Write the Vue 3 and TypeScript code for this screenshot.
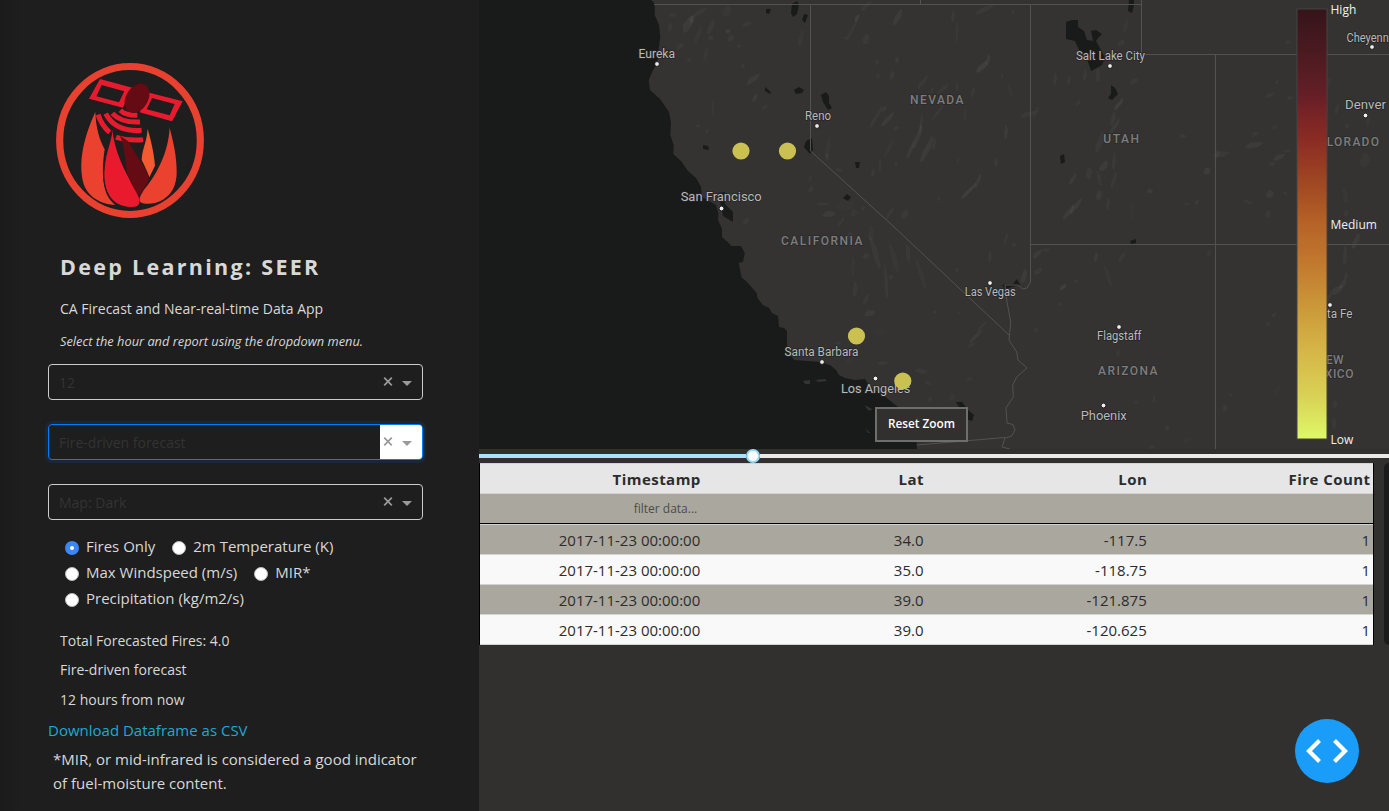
<script setup lang="ts">
interface Patch { x: number; y: number; w: number; h: number; r: number; o: number }
interface Place { name: string; x: number; y: number; w: number; size: number; dot: [number, number] }
interface Region { name: string; x: number; y: number; w: number }

const selects = [
  { value: '12', focused: false },
  { value: 'Fire-driven forecast', focused: true },
  { value: 'Map: Dark', focused: false },
]
const layerRows = [
  [{ label: 'Fires Only', on: true }, { label: '2m Temperature (K)', on: false }],
  [{ label: 'Max Windspeed (m/s)', on: false }, { label: 'MIR*', on: false }],
  [{ label: 'Precipitation (kg/m2/s)', on: false }],
]
const summary = ['Total Forecasted Fires: 4.0', 'Fire-driven forecast', '12 hours from now']

const columns = ['Timestamp', 'Lat', 'Lon', 'Fire Count']
const rows = [
  ['2017-11-23 00:00:00', '34.0', '-117.5', '1'],
  ['2017-11-23 00:00:00', '35.0', '-118.75', '1'],
  ['2017-11-23 00:00:00', '39.0', '-121.875', '1'],
  ['2017-11-23 00:00:00', '39.0', '-120.625', '1'],
]

const places: Place[] = [
  { name: 'Eureka', x: 638.5, y: 58, w: 36.5, size: 12, dot: [657, 64] },
  { name: 'Reno', x: 805, y: 119.5, w: 26, size: 12, dot: [817, 126] },
  { name: 'San Francisco', x: 680.7, y: 201.4, w: 81, size: 13.4, dot: [721.5, 208.5] },
  { name: 'Salt Lake City', x: 1076, y: 60, w: 69, size: 12, dot: [1110, 66] },
  { name: 'Cheyenn', x: 1346.5, y: 41.5, w: 42.3, size: 12, dot: [1372, 47] },
  { name: 'Denver', x: 1345, y: 108.5, w: 41, size: 13.4, dot: [1365.5, 115.5] },
  { name: 'Las Vegas', x: 964.7, y: 296, w: 51, size: 12, dot: [990, 283] },
  { name: 'Santa Barbara', x: 784.5, y: 356, w: 74, size: 12, dot: [822, 362] },
  { name: 'Los Angeles', x: 841, y: 393, w: 69.3, size: 13.4, dot: [875.5, 378.5] },
  { name: 'Flagstaff', x: 1097, y: 339.5, w: 44.5, size: 12, dot: [1119, 327] },
  { name: 'Phoenix', x: 1080.7, y: 420, w: 46, size: 13.4, dot: [1103.5, 405.5] },
  { name: 'Santa Fe', x: 1307, y: 317.5, w: 45.5, size: 12, dot: [1330, 305] },
]
const regions: Region[] = [
  { name: 'NEVADA', x: 910, y: 103.5, w: 53.5 },
  { name: 'UTAH', x: 1103.3, y: 143, w: 35.7 },
  { name: 'CALIFORNIA', x: 781, y: 245.4, w: 81.5 },
  { name: 'ARIZONA', x: 1098, y: 375, w: 59.5 },
  { name: 'COLORADO', x: 1308, y: 146, w: 71 },
  { name: 'NEW', x: 1317.5, y: 363.5, w: 26 },
  { name: 'MEXICO', x: 1306.5, y: 377.5, w: 47 },
]
const fires = [[741, 151], [787.5, 151], [856.5, 336], [902.8, 381]]

// x, y, width, height, rotation, strength
const relief: number[][] = [
  [688, 24, 20, 8, -55, 4], [673, 15, 9, 4, 0, 3], [670, 27, 5, 9, 0, 3], [700, 12, 18, 4, -30, 3], [692, 19, 9, 5, -60, 4],
  [711, 27, 6, 16, 20, 3], [680, 46, 10, 5, -30, 3], [727, 11, 9, 12, 10, 2], [747, 24, 11, 4, -12, 3], [728, 31, 6, 4, 0, 5],
  [731, 38, 7, 7, 0, 3], [711, 38, 6, 5, 30, 3], [706, 54, 5, 14, 10, 2], [689, 60, 6, 3, -20, 3], [739, 46, 6, 4, 0, 3],
  [753, 79, 18, 5, -35, 4], [743, 66, 4, 5, 0, 3], [755, 98, 4, 9, 20, 4], [765, 107, 4, 7, 40, 3], [713, 108, 3, 18, -5, 2],
  [698, 126, 5, 3, 20, 3], [707, 131, 3, 5, 0, 3], [746, 221, 8, 5, -30, 3], [698, 35, 5, 20, 20, 2],
  [866, 6, 16, 4, -40, 3], [857, 18, 9, 4, -55, 5], [898, 17, 6, 18, 25, 4], [953, 16, 4, 11, 0, 3], [957, 32, 3, 20, 0, 3],
  [985, 9, 24, 5, -25, 3], [1013, 12, 3, 4, 0, 3], [866, 39, 7, 11, 10, 3], [846, 38, 8, 3, 0, 2], [801, 38, 5, 18, 10, 2],
  [852, 30, 4, 25, 25, 2], [897, 60, 4, 6, 0, 4], [877, 62, 4, 6, 0, 3], [892, 75, 5, 9, 0, 3], [878, 76, 5, 5, 0, 3],
  [923, 82, 4, 17, 35, 3], [943, 89, 4, 15, 45, 3], [982, 67, 6, 15, 40, 5], [988, 60, 4, 12, 10, 4], [973, 92, 4, 11, 10, 3],
  [1002, 76, 3, 6, -10, 3], [1010, 90, 3, 15, -15, 2], [957, 86, 3, 10, 0, 3], [939, 111, 3, 22, 35, 3], [932, 90, 3, 6, 0, 3],
  [876, 117, 4, 26, 28, 3], [888, 119, 5, 19, 40, 4], [896, 128, 8, 4, -15, 3], [884, 109, 9, 4, -40, 3], [921, 124, 3, 21, 5, 3],
  [918, 136, 5, 26, 18, 4], [911, 149, 4, 20, 20, 4], [927, 149, 6, 29, 23, 4], [934, 143, 4, 14, 0, 3], [889, 148, 4, 20, 25, 2],
  [965, 115, 2, 14, 0, 3], [1006, 132, 4, 14, 0, 4], [1028, 114, 18, 5, -15, 3], [1036, 112, 4, 12, 20, 3], [996, 162, 4, 9, -10, 3],
  [978, 181, 4, 16, 20, 4], [969, 191, 4, 22, 43, 5], [939, 199, 3, 5, 0, 3], [958, 160, 3, 6, 0, 2], [880, 165, 3, 13, 0, 3],
  [873, 173, 4, 8, 0, 3], [896, 164, 3, 4, 0, 3], [828, 148, 5, 20, 4, 2], [827, 157, 5, 8, -20, 3], [839, 170, 7, 4, 30, 3],
  [811, 189, 5, 7, 20, 3], [822, 204, 14, 3, 0, 3], [829, 214, 14, 6, 0, 4], [854, 213, 7, 8, 0, 2], [905, 214, 7, 10, 20, 3],
  [890, 213, 4, 15, 30, 3], [841, 222, 3, 12, 30, 3], [863, 208, 4, 5, 0, 3], [810, 178, 4, 6, 0, 2], [845, 205, 20, 12, 0, 1],
  [1055, 79, 4, 13, 0, 3], [1069, 80, 3, 11, 10, 3], [1085, 75, 4, 11, 5, 3], [1098, 75, 5, 14, -4, 3], [1119, 104, 4, 15, 35, 5],
  [1078, 103, 3, 7, 30, 3], [1134, 81, 10, 5, -30, 3], [1121, 43, 9, 5, -20, 3], [1126, 25, 5, 14, 10, 2], [1113, 119, 5, 15, 10, 3],
  [1100, 142, 7, 23, 15, 3], [1115, 126, 4, 19, 30, 4], [1089, 173, 7, 12, 0, 3], [1104, 166, 7, 12, 30, 4], [1114, 161, 4, 18, 0, 3],
  [1073, 179, 4, 13, 30, 4], [1076, 206, 5, 20, 35, 4], [1069, 212, 5, 19, 35, 4], [1099, 195, 6, 10, 0, 4], [1108, 204, 4, 12, 0, 3],
  [1099, 178, 4, 16, -15, 3], [1114, 180, 4, 17, 15, 3], [1150, 191, 6, 5, 20, 4], [1183, 136, 8, 4, 15, 3], [1132, 210, 6, 18, 0, 1],
  [1254, 145, 20, 6, -8, 4], [1255, 134, 8, 4, -25, 3], [1270, 95, 12, 4, -15, 3], [1277, 82, 3, 5, 40, 3], [1288, 42, 6, 4, 0, 3],
  [1207, 171, 8, 7, -15, 4], [1221, 154, 18, 6, -5, 3], [1217, 154, 5, 9, 0, 3], [1279, 157, 14, 5, -20, 4], [1272, 164, 8, 4, 0, 3],
  [1270, 194, 8, 8, 0, 4], [1248, 202, 11, 3, 20, 3], [1197, 202, 5, 5, 10, 3], [1187, 204, 7, 2, 0, 3], [1287, 151, 9, 3, 0, 3],
  [1285, 193, 5, 3, 30, 3], [1290, 98, 7, 4, 0, 3], [1268, 214, 5, 8, 0, 3], [1275, 127, 5, 6, 40, 2],
  [1365, 160, 11, 15, 0, 2], [1345, 195, 5, 16, -15, 2], [1347, 126, 5, 5, 0, 3], [1368, 120, 4, 14, 0, 2], [1337, 109, 4, 10, 10, 3],
  [1346, 213, 5, 6, 0, 3], [1329, 82, 4, 11, 10, 2], [1356, 241, 6, 17, 20, 4], [1345, 255, 5, 20, 0, 3], [1346, 276, 4, 8, 0, 3],
  [1337, 290, 14, 7, -30, 4], [1343, 284, 5, 11, 25, 4], [1329, 297, 4, 14, 25, 3], [1335, 404, 5, 8, 0, 3], [1334, 423, 5, 11, -10, 3],
  [1006, 239, 3, 13, 10, 3], [1014, 245, 5, 5, 20, 3], [1024, 276, 6, 15, 10, 4], [1037, 254, 13, 5, -40, 4], [1046, 250, 10, 3, 0, 3],
  [1038, 271, 11, 5, -30, 3], [1063, 287, 10, 4, -35, 5], [1076, 281, 4, 3, 0, 3], [1060, 304, 5, 3, 0, 3], [1036, 330, 4, 5, 0, 3],
  [1108, 276, 5, 22, -20, 2], [1096, 257, 4, 10, 5, 4], [1122, 257, 4, 11, 30, 3], [1209, 253, 4, 6, 10, 3], [1118, 353, 4, 6, 0, 3],
  [1136, 402, 6, 3, 0, 3], [1154, 399, 3, 8, 0, 3], [1167, 428, 5, 6, 0, 3], [1225, 408, 6, 7, 0, 3], [1231, 395, 4, 3, 0, 3],
  [1274, 315, 7, 4, -30, 3], [1268, 324, 5, 4, 0, 3], [1187, 440, 9, 7, 0, 1], [1152, 447, 6, 4, 0, 3], [1277, 390, 6, 14, 25, 1],
  [850, 236, 7, 8, 0, 3], [866, 256, 8, 6, 0, 3], [871, 233, 6, 15, 0, 2], [875, 252, 6, 35, -18, 3], [886, 281, 4, 36, -5, 3],
  [894, 258, 6, 30, -18, 2], [908, 253, 5, 18, -8, 3], [921, 274, 5, 32, -20, 2], [855, 289, 5, 16, 0, 3], [866, 299, 5, 10, 20, 3],
  [870, 313, 12, 6, -5, 4], [891, 277, 5, 5, 0, 3], [935, 312, 5, 4, 25, 3], [959, 313, 3, 3, 0, 3], [853, 266, 4, 20, 0, 2],
  [976, 336, 4, 18, 40, 4], [971, 345, 7, 4, -20, 3], [982, 326, 3, 14, 40, 3], [838, 343, 7, 3, 0, 3], [849, 361, 8, 8, 0, 1],
  [883, 363, 12, 4, 0, 3], [921, 371, 14, 5, 15, 3], [928, 383, 8, 3, 30, 3], [952, 397, 7, 8, 0, 2], [970, 379, 8, 4, 0, 2],
  [990, 257, 4, 11, 0, 3], [957, 270, 4, 5, 0, 3], [930, 399, 4, 6, 0, 3], [955, 436, 30, 4, -10, 1], [880, 332, 13, 8, 0, 1],
]
const patches: Patch[] = relief.map(([x, y, w, h, r, o]) => ({ x, y, w, h, r, o: o * 0.011 }))

// A small irregular polygon centred on the patch.
function patchPoints(p: Patch): string {
  const a = p.w / 2
  const b = p.h / 2
  return [[-a, b * 0.3], [-a * 0.3, -b], [a * 0.5, -b * 0.8], [a, -b * 0.2], [a * 0.4, b * 0.9], [-a * 0.6, b]]
    .map(([dx, dy]) => `${(p.x + dx).toFixed(1)},${(p.y + dy).toFixed(1)}`)
    .join(' ')
}
</script>

<template>
  <div class="app">
    <aside class="sidebar">
      <svg class="logo" viewBox="0 0 540 540">
        <ellipse cx="270" cy="271.500" rx="211" ry="222" fill="none" stroke="#e8412f" stroke-width="21.500" />
        <g fill="#ea1a2e" fill-rule="evenodd">
          <path d="M180 87L277 113L249 173L147 146ZM185 105L169 139L237 157L253 124Z" />
          <path d="M322 127L428 154L396 214L299 187ZM336 144L320 178L389 196L404 162Z" />
        </g>
        <g fill="none" stroke="#ea1a2e" stroke-width="15">
          <path d="M241 181Q257 197 292 196" />
          <path d="M217 190Q244 219 300 216" />
          <path d="M197 191Q226 247 305 241" />
          <path d="M174 194Q186 228 209 247M228 262Q265 273 309 269" />
        </g>
        <ellipse cx="291" cy="145" rx="33" ry="47" transform="rotate(32 291 145)" fill="#650b13" />
        <path d="M166 186C168 237 179 270 194 298C188 337 185 390 197 424C203 443 214 455 226 465C192 464 148 447 132 405C112 340 132 260 166 186Z" fill="#ea422f" />
        <path d="M323 236C332 270 341 300 345 347L328 382C322 364 313 346 305 330C307 293 320 280 323 236Z" fill="#f35a32" />
        <path d="M218 231C223 302 254 362 289 422C302 445 303 463 291 470C273 476 244 471 226 458C195 435 188 391 193 350C197 305 212 280 218 231Z" fill="#e9192e" stroke="#1e1e1e" stroke-width="3" />
        <path d="M240 257L265 274C287 313 310 343 327 381C323 405 309 420 295 439C281 409 264 389 259 356C256 321 253 292 240 257Z" fill="#650b13" />
        <path d="M389 233C400 276 411 321 410 370C409 407 395 432 371 448C348 463 316 465 302 457C293 450 303 431 318 412C348 374 385 311 389 233Z" fill="#ea422f" />
      </svg>
      <h1 class="title">Deep Learning: SEER</h1>
      <p class="subtitle">CA Firecast and Near-real-time Data App</p>
      <p class="hint">Select the hour and report using the dropdown menu.</p>

      <div v-for="s in selects" :key="s.value" class="select" :class="{ focused: s.focused }">
        <span class="value">{{ s.value }}</span>
        <span class="controls">
          <svg viewBox="0 0 42 34" width="42" height="34">
            <path d="M4.200 12.700L11.800 20.300M11.800 12.700L4.200 20.300" stroke="#999" stroke-width="1.700" fill="none" />
            <path d="M22 16H32L27 21Z" fill="#999" />
          </svg>
        </span>
      </div>

      <div class="layers">
        <div v-for="(row, i) in layerRows" :key="i" class="layer-row">
          <label v-for="l in row" :key="l.label" class="layer">
            <span class="radio" :class="{ on: l.on }"></span>{{ l.label }}
          </label>
        </div>
      </div>

      <p v-for="t in summary" :key="t" class="summary">{{ t }}</p>
      <a class="download">Download Dataframe as CSV</a>
      <p class="note">*MIR, or mid-infrared is considered a good indicator<br />of fuel-moisture content.</p>
    </aside>

    <main class="main">
      <div class="map">
        <svg viewBox="479 0 910 449" width="910" height="449">
          <defs>
            <linearGradient id="heat" x1="0" y1="0" x2="0" y2="1">
              <stop offset="0" stop-color="#35141a" />
              <stop offset="0.100" stop-color="#4b1a21" />
              <stop offset="0.200" stop-color="#651f26" />
              <stop offset="0.240" stop-color="#762326" />
              <stop offset="0.300" stop-color="#892b24" />
              <stop offset="0.400" stop-color="#9f4622" />
              <stop offset="0.500" stop-color="#b66327" />
              <stop offset="0.600" stop-color="#c27b2f" />
              <stop offset="0.700" stop-color="#cc9a3a" />
              <stop offset="0.800" stop-color="#d6b748" />
              <stop offset="0.900" stop-color="#d9d155" />
              <stop offset="1" stop-color="#def968" />
            </linearGradient>
          </defs>
          <rect x="479" y="0" width="910" height="449" fill="#343332" />
          <polygon
            v-for="(p, i) in patches" :key="i" :points="patchPoints(p)" :fill-opacity="p.o"
            :transform="`rotate(${p.r} ${p.x} ${p.y})`" fill="#fff"
          />
          <g fill="#191a1a">
            <path d="M479 0H651.300L654.700 4V15L659 25L660.300 37L658.500 50L657 64L653 70L648.700 80L650 90L660 99L669 112L671 122L670.300 135L673.700 145L673.300 154L681 161L688 171L696 178L701 187L702 197L709 201L716 205L718.500 213L718 220L722 229V237L731.700 246H741L744.700 253L743 262L738.700 263L741.700 277.700L746 281L756.700 293L757.500 298L763 305L769 308L772 313L778 316L779 327L784 328L787 331V345L789 353L794 360L818 361.700L830 365L836 370L839 375L845 378L855 380L865 379L870 387L883 395L898 407L908 423L916 438L917 449H479Z" />
            <path d="M718 193L725 192L725 204L733 212V222L723 216L721 206Z" />
            <path d="M1066 22L1072 20L1078 20V27L1084 31L1087 40L1093 41L1091 31L1096 30L1102 34L1098 38L1096 41L1100 48L1105 58L1102 65L1091 71L1087 59L1080 52L1075 41L1066 39Z" />
            <path d="M1111 85L1115 88L1118 94L1112 100L1108 98L1111 94Z" />
            <path d="M1129 0H1134V5L1132 13L1128 11Z" />
            <path d="M1060 156L1064 154L1065 162L1061 164Z" />
            <path d="M792 4L797 1L799 5L797 14L793 17L791 13Z" />
            <path d="M804 14L808 15L805 23L802 20Z" />
            <path d="M794 90L799 87L804 90L802 93L796 94Z" />
            <path d="M821 95L826 92L829 96V103L832 108L828 110L823 102Z" />
            <path d="M806 141L812 138L813 150L810 154L804 147Z" />
            <path d="M855 162L860 162L859 168L856 168Z" />
            <path d="M843 198L847 194L851 197L848 201Z" />
            <path d="M766 9L771 9L769 14L766 13Z" />
            <path d="M765 87L771 92L770 94L765 91Z" />
            <path d="M703 145L708 146L709 150L703 149Z" />
            <path d="M1130 241L1136 239V243L1131 244Z" />
            <path d="M1002 285L1007 284L1013 284L1017 279L1020 285L1012 287L1005 289Z" />
            <path d="M956 402L962 402L968 410L974 415L972 421L966 419Z" />
          </g>
          <g fill="#343332">
            <path d="M803 381L810 380V384L805 384Z" />
            <path d="M815 380L825 379L827 381L819 382Z" />
            <path d="M865 405L872 409L870 411L867 409Z" />
            <path d="M865 428L870 433L868 433Z" />
          </g>
          <g class="borders">
            <path d="M654 4.500H1141.500M810.500 5V151L892 225L1009 335M920.500 0V4.500M1030.500 5V282L1027 288L1022.700 289L1018 285H1005L1006.700 300L1010.700 322L1009 340L1016.700 352L1018 360L1027 368L1016.700 377L1012.700 385L1013.300 397L1006 408L1007 423L1013 424.500L1015 430L1011.700 436L1005 438L1002 447L1010 449" />
            <path d="M1141.500 0V54.500H1389M1215.500 54.500V449M1030.500 244.500H1389M917 445L1005 437.500" />
          </g>
          <g class="regions">
            <text v-for="r in regions" :key="r.name" :x="r.x" :y="r.y" :textLength="r.w">{{ r.name }}</text>
          </g>
          <g v-for="p in places" :key="p.name" class="place">
            <circle :cx="p.dot[0]" :cy="p.dot[1]" r="2.400" />
            <text :x="p.x" :y="p.y" :textLength="p.w" :font-size="p.size" lengthAdjust="spacingAndGlyphs">{{ p.name }}</text>
          </g>
          <circle v-for="(f, i) in fires" :key="i" :cx="f[0]" :cy="f[1]" r="8.600" fill="#cbc153" />
          <rect x="1297" y="9" width="30" height="430" fill="url(#heat)" stroke="#444" stroke-width="1" />
          <g class="scale">
            <text x="1330.500" y="14">High</text>
            <text x="1330.500" y="229">Medium</text>
            <text x="1330.500" y="444">Low</text>
          </g>
        </svg>
        <button class="reset">Reset Zoom</button>
      </div>

      <div class="slider">
        <div class="done"></div>
        <div class="handle"></div>
        <div class="rest"></div>
      </div>

      <div class="table-area">
        <div class="table">
          <div class="row head"><span v-for="c in columns" :key="c">{{ c }}</span></div>
          <div class="row filter"><span>filter data...</span></div>
          <div v-for="(r, i) in rows" :key="i" class="row" :class="{ alt: i % 2 === 0 }">
            <span v-for="(c, j) in r" :key="j">{{ c }}</span>
          </div>
        </div>
        <div class="scrollbar"></div>
      </div>

      <button class="debug">
        <svg viewBox="0 0 64 64" width="64" height="64">
          <path d="M24.500 21.500L14 32L24.500 42.500M39.500 21.500L50 32L39.500 42.500" fill="none" stroke="#fff" stroke-width="4.200" />
        </svg>
      </button>
    </main>
  </div>
</template>

<style>
body {
  margin: 0;
  overflow: hidden;
}
</style>

<style scoped>
.app {
  display: flex;
  width: 1389px;
  height: 811px;
  background: #31302f;
  color: #d8d8d8;
  font-family: "Open Sans", sans-serif;
  font-size: 15px;
}
.app * {
  box-sizing: border-box;
}
p,
h1 {
  margin: 0;
}
.sidebar {
  flex: none;
  width: 479px;
  padding: 50px 56px 0 48px;
  background: linear-gradient(90deg, #1b1b1b, #1e1e1e 21px);
  display: flex;
  flex-direction: column;
  white-space: nowrap;
}
.logo {
  flex: none;
  width: 180px;
  height: 180px;
  margin-left: -8px;
}
.title {
  margin: 22px 0 0 12px;
  font-size: 21.5px;
  line-height: 30px;
  font-weight: 700;
  letter-spacing: 2.3px;
}
.subtitle {
  margin: 17px 0 0 12px;
  font-size: 14px;
  line-height: 20px;
}
.hint {
  margin: 12px 0 13px 12px;
  font-size: 12.8px;
  line-height: 20px;
  font-style: italic;
}
.select {
  display: flex;
  justify-content: space-between;
  width: 375px;
  height: 36px;
  margin-bottom: 24px;
  border: 1px solid #ccc;
  border-radius: 4px;
  line-height: 36px;
  font-size: 14px;
  color: #333;
  overflow: hidden;
}
.select.focused {
  border-color: #007eff;
  box-shadow: 0 0 0 3px rgba(0, 126, 255, 0.1);
}
.value {
  padding-left: 10px;
}
.controls {
  width: 42px;
  height: 34px;
}
.controls svg {
  display: block;
}
.focused .controls {
  background: #fff;
}
.layers {
  margin: -11px 0 0 17px;
}
.layer-row {
  display: flex;
  height: 26px;
  line-height: 26px;
}
.layer {
  display: flex;
  align-items: center;
  margin-right: 17px;
}
.radio {
  width: 14px;
  height: 14px;
  margin: 3px 7px 0 0;
  border-radius: 50%;
  background: #fff;
  border: 1px solid #bbb;
}
.radio.on {
  border: 5px solid #3b87f7;
}
.layers + .summary {
  margin: 20px 0 9px 12px;
}
.summary {
  margin: 0 0 10px 12px;
  font-size: 14px;
  line-height: 20px;
}
.download {
  margin-top: -1px;
  line-height: 22px;
  color: #1fa8d3;
}
.note {
  margin: 6px 0 0 5px;
  line-height: 24px;
}
.main {
  position: relative;
  width: 910px;
  display: flex;
  flex-direction: column;
}
.map {
  position: relative;
  height: 449px;
}
.map svg {
  display: block;
}
.borders path {
  fill: none;
  stroke: #525251;
  stroke-width: 1;
}
.regions text {
  font: 500 12px Roboto, sans-serif;
  fill: #7d7d7d;
  stroke: #2b2a2a;
  stroke-width: 1.5px;
  paint-order: stroke;
}
.place circle {
  fill: #eee;
  stroke: #1c1c1c;
  stroke-width: 1;
}
.place text {
  font-family: Roboto, sans-serif;
  fill: #b9b9b9;
  stroke: #252525;
  stroke-width: 1.5px;
  paint-order: stroke;
}
.scale text {
  font: 12px "Open Sans", sans-serif;
  fill: #f0f0f0;
}
.reset {
  position: absolute;
  left: 396px;
  top: 407px;
  width: 93px;
  height: 35px;
  padding: 0 0 4px;
  border: 2px solid #6e6e6e;
  background: #31302f;
  color: #fff;
  font: 600 11.8px "Open Sans", sans-serif;
}
.slider {
  display: flex;
  align-items: center;
  height: 14px;
}
.done {
  width: 267px;
  height: 4px;
  background: #abe2fb;
}
.handle {
  width: 14px;
  height: 14px;
  border: 2px solid #96dbfa;
  border-radius: 50%;
  background: #fff;
}
.rest {
  flex: 1;
  height: 4px;
  background: #e9e9e9;
}
.table-area {
  display: flex;
  justify-content: space-between;
}
.table {
  width: 895px;
  border: solid #000;
  border-width: 0 1px;
  color: #2c2c2c;
}
.row {
  display: grid;
  grid-template-columns: repeat(4, 1fr);
  height: 30px;
  border-top: 1px solid #d3d3d3;
  background: #f9f9f9;
  line-height: 30px;
  text-align: right;
}
.row:last-child {
  height: 31px;
  border-bottom: 1px solid #d3d3d3;
}
.row span {
  padding-right: 3px;
}
.row.head {
  background: #e6e6e6;
  font-weight: 700;
  letter-spacing: 0.45px;
}
.row.head span {
  padding-right: 2.5px;
}
.row.filter,
.row.alt {
  background: #aaa79e;
}
.row.filter {
  height: 31px;
  border-bottom: 1px solid #000;
  font-size: 12px;
  color: #4c4c4a;
}
.row.filter span {
  padding-right: 6px;
}
.scrollbar {
  width: 5px;
  height: 182px;
  border-radius: 5px 0 0 5px;
  background: #1b1b1b;
}
.debug {
  position: absolute;
  left: 816px;
  top: 719px;
  width: 64px;
  height: 64px;
  padding: 0;
  border: 0;
  border-radius: 50%;
  background: #1a9df9;
}
</style>
